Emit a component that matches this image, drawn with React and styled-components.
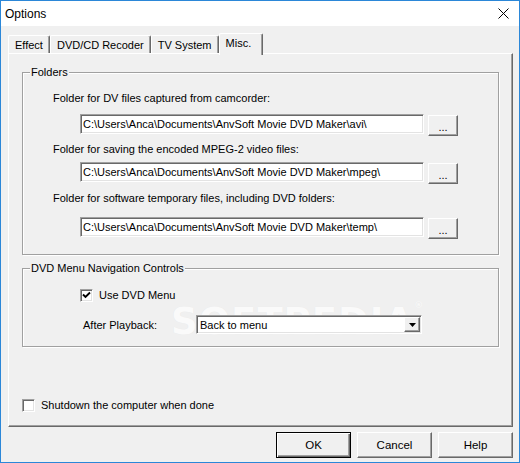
import React from "react";
import styled, { createGlobalStyle, css } from "styled-components";

const Global = createGlobalStyle`
  html, body { margin: 0; padding: 0; background: #f0f0f0; }
  body { font-family: "Liberation Sans", Arial, sans-serif; font-size: 11px; color: #000; }
  * { box-sizing: border-box; }
`;

const Window = styled.div`
  width: 520px;
  height: 463px;
  border: 1px solid #2b87d8;
  background: #f0f0f0;
  display: flex;
  flex-direction: column;
`;

const TitleBar = styled.div`
  height: 25px;
  background: #fff;
  display: flex;
  align-items: center;
  justify-content: space-between;
  padding: 0 10px 0 4px;
  font-size: 12px;
`;

const Body = styled.div`
  flex: 1;
  display: flex;
  flex-direction: column;
  padding: 7px 6px 0 7px;
`;

const TabRow = styled.div`
  display: flex;
  align-items: flex-end;
  height: 20px;
  position: relative;
  z-index: 1;
`;

const Tab = styled.div`
  height: ${(p) => (p.$active ? 22 : 18)}px;
  margin-bottom: ${(p) => (p.$active ? -2 : 0)}px;
  padding: ${(p) => (p.$active ? "0 11px 3px 6px" : "0 6px")};
  border-left: 1px solid #fff;
  border-top: 1px solid #fff;
  border-right: 1px solid #696969;
  box-shadow: inset -1px 0 0 #a0a0a0;
  border-radius: 2px 2px 0 0;
  background: #f0f0f0;
  display: flex;
  align-items: center;
  white-space: nowrap;
`;

const Panel = styled.div`
  position: relative;
  height: 374px;
  border-top: 1px solid #fff;
  border-left: 1px solid #fff;
  border-right: 1px solid #696969;
  border-bottom: 1px solid #696969;
  box-shadow: inset -1px -1px 0 #a0a0a0;
  padding: 18px 13px 0 13px;
  display: flex;
  flex-direction: column;
`;

const GroupBox = styled.div`
  position: relative;
  border: 1px solid #a0a0a0;
  box-shadow: inset 1px 1px 0 #fff, 1px 1px 0 #fff;
  margin-top: ${(p) => p.$top || 0}px;
  padding: ${(p) => p.$pad};
  display: flex;
  flex-direction: column;
`;

const Legend = styled.div`
  position: absolute;
  top: -7px;
  left: 7px;
  padding: 0 1px;
  background: #f0f0f0;
  line-height: 13px;
`;

const Label = styled.div`
  line-height: 14px;
  height: 14px;
  margin-top: ${(p) => p.$top || 0}px;
  white-space: nowrap;
`;

const InputRow = styled.div`
  display: flex;
  align-items: flex-start;
  gap: 4px;
  margin-left: 27px;
  margin-top: ${(p) => p.$top || 0}px;
`;

const sunken = css`
  border: 1px solid;
  border-color: #a0a0a0 #fff #fff #a0a0a0;
  box-shadow: inset 1px 1px 0 #696969, inset -1px -1px 0 #e3e3e3;
  background: #fff;
`;

const raised = css`
  border: 1px solid;
  border-color: #fff #696969 #696969 #fff;
  box-shadow: inset -1px -1px 0 #a0a0a0;
  background: #f0f0f0;
`;

const PathInput = styled.input`
  ${sunken};
  width: 344px;
  height: 20px;
  padding: 0 2px;
  font: inherit;
  color: #000;
  outline: none;
`;

const BrowseButton = styled.button`
  ${raised};
  width: 30px;
  height: 21px;
  margin-top: 1px;
  padding: 3px 0 0;
  font: inherit;
  color: #000;
  line-height: 11px;
`;

const CheckRow = styled.label`
  position: relative;
  display: flex;
  align-items: center;
  gap: ${(p) => p.$gap || 6}px;
  margin-top: ${(p) => p.$top || 0}px;
  line-height: 13px;
`;

const CheckBox = styled.span`
  ${sunken};
  width: 13px;
  height: 13px;
  display: flex;
  align-items: center;
  justify-content: center;
  flex: none;
`;

const PlaybackRow = styled.div`
  display: flex;
  align-items: center;
  margin-top: 13px;
  padding-left: 3px;
`;

const FieldLabel = styled.span`
  width: 113px;
`;

const Select = styled.div`
  ${sunken};
  width: 226px;
  height: 19px;
  display: flex;
  align-items: center;
  justify-content: space-between;
  padding: 0 1px 0 3px;
`;

const DropButton = styled.span`
  ${raised};
  width: 16px;
  height: 15px;
  display: flex;
  align-items: center;
  justify-content: center;
`;

const ButtonRow = styled.div`
  display: flex;
  justify-content: flex-end;
  gap: 6px;
  margin-top: 5px;
`;

const DialogButton = styled.button`
  ${raised};
  width: 75px;
  height: 26px;
  font: inherit;
  font-size: 11.5px;
  color: #000;
  ${(p) =>
    p.$default &&
    css`
      border: 1px solid #000;
      box-shadow: inset 1px 1px 0 #fff, inset -1px -1px 0 #696969, inset -2px -2px 0 #a0a0a0;
    `}
`;

const Watermark = styled.div`
  position: absolute;
  left: 162px;
  top: 246px;
  font-family: "DejaVu Sans", sans-serif;
  font-weight: bold;
  font-size: 37px;
  letter-spacing: 1px;
  color: #fafafa;
  text-shadow: 0 0 1px rgba(0, 0, 0, 0.05);
  pointer-events: none;
  sup { font-size: 9px; vertical-align: top; }
`;

const Check = () => (
  <svg width="9" height="9" viewBox="0 0 9 9">
    <path d="M1 3.5 L3.5 6 L8 1.5" fill="none" stroke="#000" strokeWidth="1.9" />
  </svg>
);

const folders = [
  { label: "Folder for DV files captured from camcorder:", value: "C:\\Users\\Anca\\Documents\\AnvSoft Movie DVD Maker\\avi\\", lt: 0, rt: 9 },
  { label: "Folder for saving the encoded MPEG-2 video files:", value: "C:\\Users\\Anca\\Documents\\AnvSoft Movie DVD Maker\\mpeg\\", lt: 6, rt: 6 },
  { label: "Folder for software temporary files, including DVD folders:", value: "C:\\Users\\Anca\\Documents\\AnvSoft Movie DVD Maker\\temp\\", lt: 7, rt: 12 },
];

export default function App() {
  return (
    <>
      <Global />
      <Window>
        <TitleBar>
          <span>Options</span>
          <svg width="11" height="11" viewBox="0 0 11 11">
            <path d="M0.5 0.5 L10.5 10.5 M10.5 0.5 L0.5 10.5" stroke="#000" strokeWidth="1" />
          </svg>
        </TitleBar>
        <Body>
          <TabRow>
            <Tab>Effect</Tab>
            <Tab>DVD/CD Recoder</Tab>
            <Tab>TV System</Tab>
            <Tab $active>Misc.</Tab>
          </TabRow>
          <Panel>
            <Watermark>
              SOFTPEDIA<sup>®</sup>
            </Watermark>
            <GroupBox $pad="18px 0 15px 30px">
              <Legend>Folders</Legend>
              {folders.map((f) => (
                <React.Fragment key={f.label}>
                  <Label $top={f.lt}>{f.label}</Label>
                  <InputRow $top={f.rt}>
                    <PathInput readOnly defaultValue={f.value} />
                    <BrowseButton>...</BrowseButton>
                  </InputRow>
                </React.Fragment>
              ))}
            </GroupBox>
            <GroupBox $top={13} $pad="20px 0 12px 57px">
              <Legend>DVD Menu Navigation Controls</Legend>
              <CheckRow>
                <CheckBox>
                  <Check />
                </CheckBox>
                Use DVD Menu
              </CheckRow>
              <PlaybackRow>
                <FieldLabel>After Playback:</FieldLabel>
                <Select>
                  <span>Back to menu</span>
                  <DropButton>
                    <svg width="7" height="4" viewBox="0 0 7 4">
                      <path d="M0 0 H7 L3.5 4 Z" fill="#000" />
                    </svg>
                  </DropButton>
                </Select>
              </PlaybackRow>
            </GroupBox>
            <CheckRow $top={52} $gap={6}>
              <CheckBox />
              Shutdown the computer when done
            </CheckRow>
          </Panel>
          <ButtonRow>
            <DialogButton $default>OK</DialogButton>
            <DialogButton>Cancel</DialogButton>
            <DialogButton>Help</DialogButton>
          </ButtonRow>
        </Body>
      </Window>
    </>
  );
}
